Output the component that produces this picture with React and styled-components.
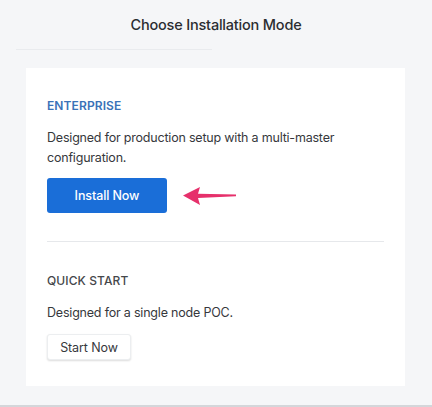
import React from "react";
import styled, { createGlobalStyle } from "styled-components";

const GlobalStyle = createGlobalStyle`
  html, body {
    margin: 0;
    padding: 0;
    background: #f5f6f8;
  }
  body {
    font-family: Inter, "Liberation Sans", Arial, sans-serif;
    -webkit-font-smoothing: antialiased;
  }
`;

const Page = styled.div`
  width: 432px;
  height: 407px;
  box-sizing: border-box;
  display: flex;
  flex-direction: column;
  border-bottom: 2px solid #d4d6da;
  overflow: hidden;
`;

const Header = styled.div`
  height: 49px;
  display: flex;
  align-items: center;
  justify-content: center;
`;

const Title = styled.h2`
  margin: 0;
  font-size: 14.5px;
  font-weight: 500;
  color: #2b2d31;
  letter-spacing: -0.2px;
`;

const HeaderRule = styled.div`
  height: 1px;
  margin: 0 220px 0 16px;
  background: #e9ebee;
`;

const Card = styled.div`
  margin: 18px 27px 0 26px;
  background: #ffffff;
  padding: 30px 21px 26px;
  display: flex;
  flex-direction: column;
`;

const Section = styled.div`
  display: flex;
  flex-direction: column;
`;

const Label = styled.div`
  font-size: 12px;
  line-height: 16px;
  font-weight: ${({ $accent }) => ($accent ? 600 : 500)};
  color: ${({ $accent }) => ($accent ? "#3a72b8" : "#45474b")};
  letter-spacing: 0.1px;
`;

const Description = styled.p`
  margin: 14px 0 0;
  font-size: 12.5px;
  line-height: 20px;
  color: #36383c;
  letter-spacing: -0.2px;
  max-width: 320px;
`;

const ActionRow = styled.div`
  display: flex;
  align-items: center;
  gap: 16px;
  margin-top: ${({ $gap }) => $gap}px;
`;

const PrimaryButton = styled.button`
  width: 120px;
  height: 35px;
  border: none;
  border-radius: 3px;
  background: #1a6ed8;
  color: #ffffff;
  font-family: inherit;
  font-size: 12.5px;
  font-weight: 500;
  letter-spacing: -0.1px;
  cursor: pointer;
`;

const SecondaryButton = styled.button`
  width: 84px;
  height: 26px;
  border: 1px solid #eceef0;
  border-radius: 3px;
  background: #ffffff;
  box-shadow: 0 1px 2px rgba(0, 0, 0, 0.14);
  color: #36383c;
  font-family: inherit;
  font-size: 12.5px;
  font-weight: 400;
  letter-spacing: -0.1px;
  cursor: pointer;
`;

const Rule = styled.hr`
  border: none;
  height: 1px;
  background: #e6e8eb;
  margin: 28px 0 31px;
  width: 337px;
`;

const Arrow = () => (
  <svg width="54" height="20" viewBox="0 0 54 20">
    <path
      d="M0 9.5 L17 1 L15 7.8 L53 8.4 L53 10.2 L15 12 L17 19 Z"
      fill="#e6306b"
      strokeLinejoin="round"
    />
  </svg>
);

export default function App() {
  return (
    <>
      <GlobalStyle />
      <Page>
        <Header>
          <Title>Choose Installation Mode</Title>
        </Header>
        <HeaderRule />
        <Card>
          <Section>
            <Label $accent>ENTERPRISE</Label>
            <Description>
              Designed for production setup with a multi-master configuration.
            </Description>
            <ActionRow $gap={10}>
              <PrimaryButton>Install Now</PrimaryButton>
              <Arrow />
            </ActionRow>
          </Section>
          <Rule />
          <Section>
            <Label>QUICK START</Label>
            <Description>Designed for a single node POC.</Description>
            <ActionRow $gap={11}>
              <SecondaryButton>Start Now</SecondaryButton>
            </ActionRow>
          </Section>
        </Card>
      </Page>
    </>
  );
}
